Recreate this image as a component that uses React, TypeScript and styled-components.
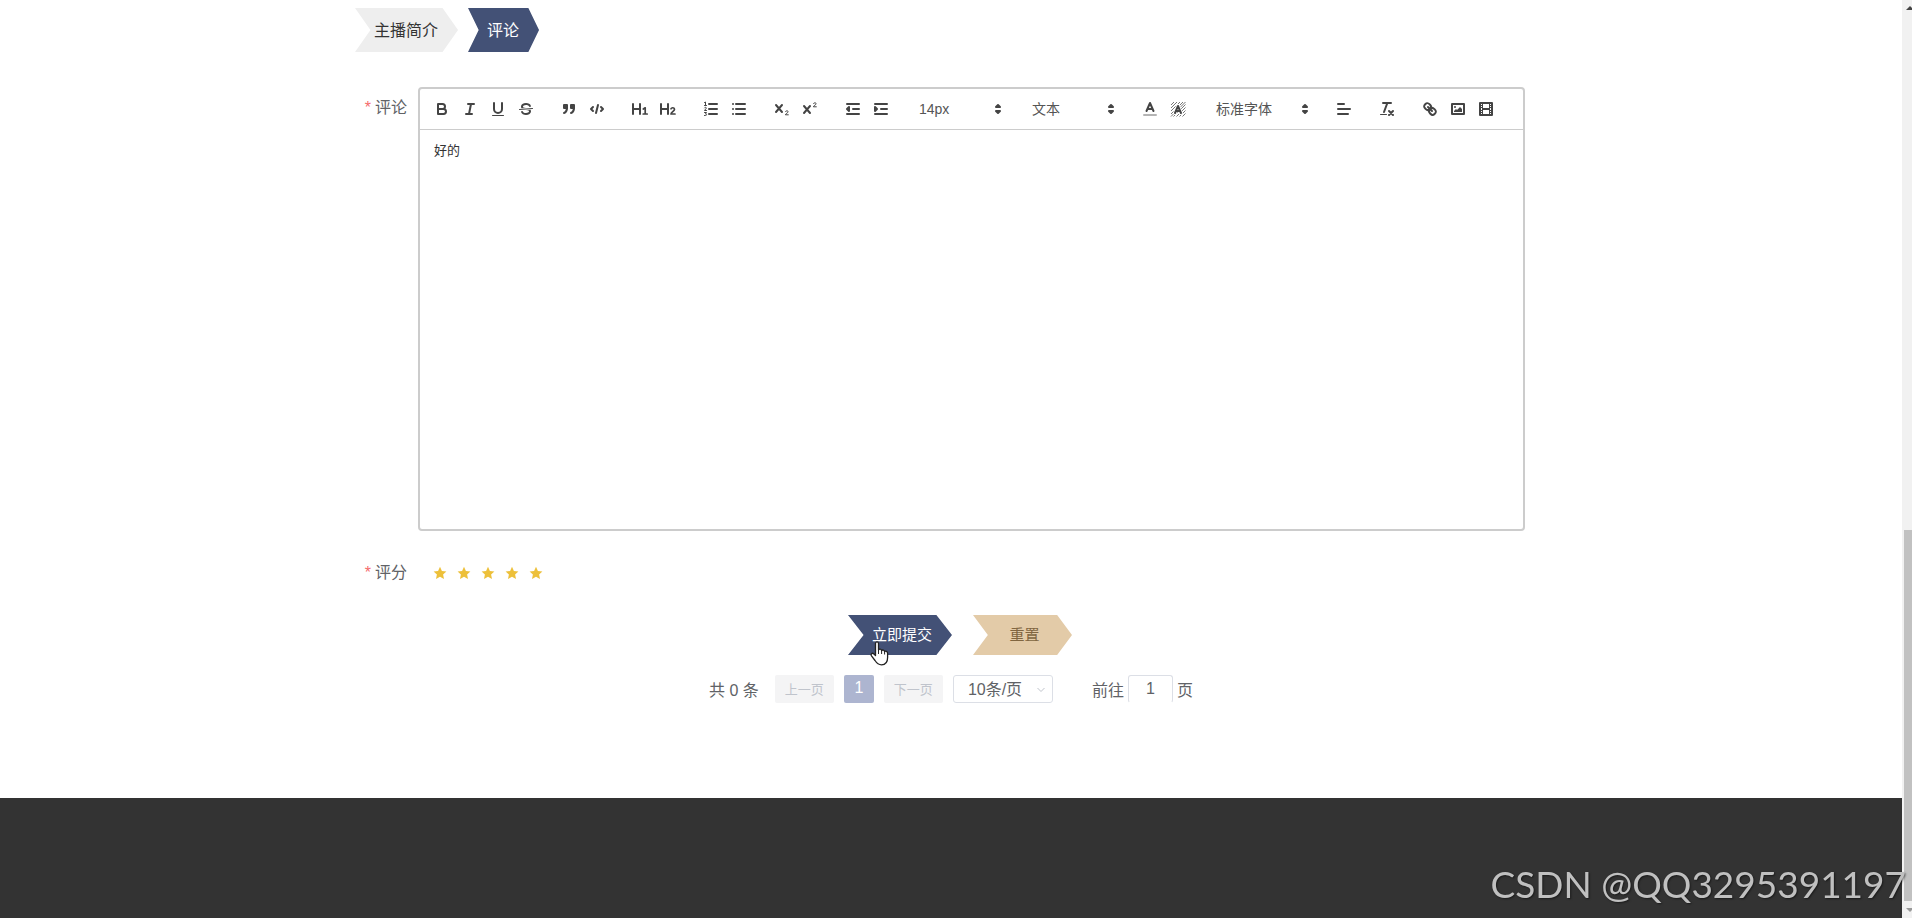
import React from 'react';
import styled, { createGlobalStyle, css } from 'styled-components';

const GlobalStyle = createGlobalStyle`
  * { box-sizing: border-box; }
  body {
    margin: 0;
    background: #fff;
    color: #606266;
    font-family: "Liberation Sans", "Noto Sans CJK SC", sans-serif;
    font-size: 16px;
  }
  button, input, select, textarea { font-family: inherit; }
`;

const Page = styled.div`
  display: flex;
  min-height: 100vh;
`;

const Main = styled.main`
  flex: 1;
  min-width: 0;
  display: flex;
  flex-direction: column;
`;

const Container = styled.div`
  width: 100%;
  max-width: 1192px;
  margin: 0 auto;
  padding: 8px 0 95px;
`;

const arrowShape = css`
  clip-path: polygon(0 0, 85% 0, 100% 50%, 85% 100%, 0 100%, 15% 50%);
  border: 0;
  cursor: pointer;
`;

const Tabs = styled.nav`
  display: flex;
  gap: 10px;
  margin-bottom: 35px;
`;

const Tab = styled.button<{ $active?: boolean }>`
  ${arrowShape}
  height: 44px;
  padding: 2px 20px 0 19px;
  font-size: 16px;
  line-height: 42px;
  background: ${(p) => (p.$active ? '#435176' : '#eee')};
  color: ${(p) => (p.$active ? '#fff' : '#333')};
`;

const FormRow = styled.div`
  display: flex;
  padding-right: 22px;
  margin-bottom: 21px;
`;

const Label = styled.label`
  flex: 0 0 63px;
  padding-right: 11px;
  text-align: right;
  line-height: 42px;
  &::before {
    content: "*";
    margin-right: 4px;
    color: #f56c6c;
  }
`;

const Editor = styled.div`
  flex: 1;
  min-width: 0;
  height: 444px;
  display: flex;
  flex-direction: column;
  border: 2px solid #ccc;
  border-radius: 4px;
`;

const Toolbar = styled.div`
  display: flex;
  flex-wrap: wrap;
  gap: 0 15px;
  padding: 8px;
  border-bottom: 1px solid #ccc;
`;

const ToolGroup = styled.div`
  display: flex;
`;

const ToolButton = styled.button`
  width: 28px;
  height: 24px;
  padding: 3px 5px;
  border: 0;
  background: none;
  cursor: pointer;
`;

const Icon = styled.svg`
  display: block;
  width: 18px;
  height: 18px;
  fill: none;
  stroke: #444;
  stroke-width: 2;
  stroke-linecap: round;
  stroke-linejoin: round;
  .fill { fill: #444; stroke: none; }
  .both { fill: #444; }
  .thin { stroke-width: 1; }
  .soft { opacity: 0.4; }
  .hatch { stroke-width: 1; stroke: #777; stroke-linecap: butt; }
  .halo { stroke: #fff; stroke-width: 4; }
`;

const Picker = styled.div<{ $width: number }>`
  position: relative;
  width: ${(p) => p.$width}px;
  height: 24px;
  svg {
    position: absolute;
    top: 3px;
    right: 1px;
    pointer-events: none;
  }
`;

const PickerSelect = styled.select`
  appearance: none;
  width: 100%;
  height: 24px;
  padding: 0 20px 0 9px;
  border: 0;
  background: none;
  color: #555;
  font-size: 14px;
  line-height: 24px;
`;

const EditorText = styled.textarea`
  flex: 1;
  padding: 12px 14px;
  border: 0;
  outline: 0;
  resize: none;
  background: none;
  color: #333;
  font-size: 13px;
  line-height: 18px;
`;

const Rating = styled.div`
  display: flex;
  align-items: center;
  gap: 10px;
  height: 42px;
  padding-left: 15px;
`;

const Star = styled.label`
  display: block;
  width: 14px;
  height: 14px;
  cursor: pointer;
  input {
    position: absolute;
    opacity: 0;
    margin: 0;
    width: 14px;
    height: 14px;
  }
  svg { display: block; fill: #edc03a; }
`;

const Actions = styled.div`
  display: flex;
  justify-content: center;
  gap: 21px;
  padding-left: 18px;
  margin-bottom: 20px;
`;

const ActionWrap = styled.div`
  position: relative;
`;

const ActionButton = styled.button<{ $primary?: boolean }>`
  ${arrowShape}
  display: block;
  min-width: 99px;
  height: 40px;
  padding: 0 20px 0 24px;
  font-size: 15px;
  line-height: 40px;
  background: ${(p) => (p.$primary ? '#435176' : '#e3cba8')};
  color: ${(p) => (p.$primary ? '#fff' : '#806540')};
`;

const HandCursor = styled.svg`
  position: absolute;
  left: 22px;
  top: 26px;
  pointer-events: none;
`;

const Pagination = styled.nav`
  display: flex;
  justify-content: center;
  align-items: center;
  height: 28px;
`;

const Total = styled.span`
  margin-right: 16px;
`;

const Pager = styled.div`
  display: flex;
  gap: 10px;
`;

const PageButton = styled.button<{ $current?: boolean }>`
  width: ${(p) => (p.$current ? 30 : 59)}px;
  height: 28px;
  padding: 0 0 2px;
  border: 0;
  border-radius: 2px;
  font-size: ${(p) => (p.$current ? 16 : 13)}px;
  background: ${(p) => (p.$current ? '#adb5d0' : '#f4f4f5')};
  color: ${(p) => (p.$current ? '#fff' : '#c0c4cc')};
`;

const SizeBox = styled.div`
  position: relative;
  width: 100px;
  svg {
    position: absolute;
    right: 7px;
    top: 10px;
    pointer-events: none;
  }
`;

const SizeSelect = styled.select`
  appearance: none;
  display: block;
  width: 100%;
  height: 28px;
  padding: 0 20px 0 14px;
  border: 1px solid #dcdfe6;
  border-radius: 3px;
  background: #fff;
  color: #606266;
  font-size: 16px;
`;

const Jump = styled.label`
  display: flex;
  align-items: center;
  gap: 4px;
  margin-left: 39px;
`;

const JumpInput = styled.input`
  width: 45px;
  height: 28px;
  padding: 0;
  border: 1px solid #dcdfe6;
  border-bottom-color: transparent;
  border-radius: 3px;
  color: #606266;
  font-size: 16px;
  text-align: center;
`;

const Footer = styled.footer`
  flex: 1;
  min-height: 120px;
  background: #333;
`;

const Scrollbar = styled.aside`
  position: sticky;
  top: 0;
  flex: 0 0 10px;
  height: 100vh;
  display: flex;
  flex-direction: column;
  align-items: flex-end;
  background: #f1f1f1;
`;

const ScrollArrow = styled.svg`
  display: block;
  flex: 0 0 17px;
  width: 8px;
`;

const ScrollSpace = styled.div`
  flex: 513;
`;

const ScrollThumb = styled.div`
  flex: 371;
  width: 8px;
  background: #c1c1c1;
`;

const Watermark = styled.div`
  position: fixed;
  right: 6px;
  bottom: 12px;
  color: #c0c0c0;
  font-family: Lato, "Liberation Sans", sans-serif;
  font-size: 37px;
  line-height: 44px;
  white-space: nowrap;
  text-shadow: 1px 1px 2px rgba(0, 0, 0, 0.5);
`;

type Tool = { name: string; art: React.ReactNode };

const bars = <path d="M3 14H15M3 4H15M9 9H15" />;

const textTools: Tool[] = [
  { name: '加粗', art: <><path d="M5 4H9.500a2.500 2.500 0 0 1 0 5H5Z" /><path d="M5 9h5.500a2.500 2.500 0 0 1 0 5H5Z" /></> },
  { name: '斜体', art: <path d="M7 4H13M5 14H11M8 14L10 4" /> },
  { name: '下划线', art: <><path d="M5 3V9a4 4 0 0 0 8 0V3" /><rect className="fill" x="3" y="15" width="12" height="1" rx="0.5" /></> },
  {
    name: '删除线',
    art: (
      <>
        <path className="thin" d="M15.500 8.500L2.500 9.500" />
        <path className="fill" d="M9.007,8C6.542,7.791,6,7.519,6,6.5,6,5.792,7.283,5,9,5c1.571,0,2.765.679,2.969,1.309a1,1,0,0,0,1.9-.617C13.356,4.106,11.354,3,9,3,6.2,3,4,4.538,4,6.5a3.2,3.2,0,0,0,.5,1.843Z" />
        <path className="fill" d="M8.984,10C11.457,10.208,12,10.479,12,11.5c0,0.708-1.283,1.5-3,1.5-1.571,0-2.765-.679-2.969-1.309a1,1,0,1,0-1.9.617C4.644,13.894,6.646,15,9,15c2.8,0,5-1.538,5-3.5a3.2,3.2,0,0,0-.5-1.843Z" />
      </>
    ),
  },
];

const quoteTools: Tool[] = [
  {
    name: '引用',
    art: (
      <>
        <rect className="both" x="4" y="5" width="3" height="3" />
        <rect className="both" x="11" y="5" width="3" height="3" />
        <path className="both" d="M7,8c0,4.031-3,5-3,5M14,8c0,4.031-3,5-3,5" />
      </>
    ),
  },
  { name: '代码', art: <path d="M5 7L3 9L5 11M13 7L15 9L13 11M10 5L8 13" /> },
];

const headingTools: Tool[] = [
  { name: '标题1', art: <><path d="M2 4V14M9 4V14M2 9H9" /><path strokeWidth="1.7" d="M12.300 9L14.200 7.800V14M12.200 14H16.200" /></> },
  { name: '标题2', art: <><path d="M2 4V14M9 4V14M2 9H9" /><path strokeWidth="1.7" d="M12 8.800C12.600 7.300 15.500 7.400 15.500 9.300C15.500 11.300 12.100 12 12 14H16" /></> },
];

const listTools: Tool[] = [
  {
    name: '有序列表',
    art: (
      <>
        <path d="M7 4H15M7 9H15M7 14H15" />
        <path className="thin" d="M2.500 2.500L3.500 2V5.500M2.500 5.500H4.500M2.500 7.800C3 7 4.500 7.200 4.300 8.200L2.500 10.500H4.500M2.500 12.500H4.500L3.500 14C5 14 4.800 15.500 3.500 15.500H2.500" />
      </>
    ),
  },
  { name: '无序列表', art: <path d="M6 4H15M6 9H15M6 14H15M3 4H3.010M3 9H3.010M3 14H3.010" /> },
];

const smallTwo = 'c.3-1.200 2.700-1.100 2.600.2c-.1 1.200-2.600 1.700-2.700 3h2.900';

const scriptTools: Tool[] = [
  { name: '下标', art: <><path d="M3 5L9 12M9 5L3 12" /><path className="thin" d={`M12.500 11.600${smallTwo}`} /></> },
  { name: '上标', art: <><path d="M3 6L9 13M9 6L3 13" /><path className="thin" d={`M12.500 3.600${smallTwo}`} /></> },
];

const indentTools: Tool[] = [
  { name: '减少缩进', art: <>{bars}<path className="both" d="M5 7V11L3 9Z" /></> },
  { name: '增加缩进', art: <>{bars}<path className="both" d="M3 7V11L5 9Z" /></> },
];

const colorTools: Tool[] = [
  { name: '文字颜色', art: <><path className="soft" d="M3 15H15" /><path d="M5.500 11L9 3L12.500 11M6.400 9H11.600" /></> },
  {
    name: '背景颜色',
    art: (
      <>
        <path
          className="hatch"
          d="M2 5L5 2M2 8L8 2M2 11L11 2M2 14L14 2M2 16.500L16.500 2M4.500 16.500L16.500 4.500M7.500 16.500L16.500 7.500M10.500 16.500L16.500 10.500M13.500 16.500L16.500 13.500"
        />
        <path className="halo" d="M6 13L9 6L12 13" />
        <path d="M6 13L9 6L12 13M7 11H11" />
      </>
    ),
  },
];

const alignTools: Tool[] = [{ name: '对齐', art: <path d="M3 9H15M3 14H13M3 4H9" /> }];

const cleanTools: Tool[] = [
  {
    name: '清除格式',
    art: (
      <>
        <path d="M5 3H13M6 12L9.350 3M11 11L15 15M15 11L11 15" />
        <rect className="fill" x="2" y="14" width="7" height="1" rx="0.5" />
      </>
    ),
  },
];

const mediaTools: Tool[] = [
  {
    name: '链接',
    art: (
      <>
        <path d="M7 7L11 11" />
        <path d="M8.9,4.577a3.476,3.476,0,0,1,.36,4.679A3.476,3.476,0,0,1,4.577,8.9C3.185,7.5,2.035,6.4,4.217,4.217S7.5,3.185,8.9,4.577Z" />
        <path d="M13.423,9.1a3.476,3.476,0,0,0-4.679-.36,3.476,3.476,0,0,0,.36,4.679c1.392,1.392,2.5,2.542,4.679.36S14.815,10.5,13.423,9.1Z" />
      </>
    ),
  },
  {
    name: '图片',
    art: (
      <>
        <rect x="3" y="4" width="12" height="10" />
        <circle className="fill" cx="6" cy="7" r="1" />
        <path className="fill" d="M5 12V11L7 9L8 10L11 7L13 9V12Z" />
      </>
    ),
  },
  {
    name: '视频',
    art: (
      <>
        <rect x="3" y="3" width="12" height="12" />
        <path className="fill" d="M5 3h1v12H5ZM12 3h1v12h-1ZM5 8h8v2H5ZM3 5h3v1H3ZM3 7h3v1H3ZM3 10h3v1H3ZM3 12h3v1H3ZM12 5h3v1h-3ZM12 7h3v1h-3ZM12 10h3v1h-3ZM12 12h3v1h-3Z" />
      </>
    ),
  },
];

function Tools({ items }: { items: Tool[] }) {
  return (
    <ToolGroup>
      {items.map((tool) => (
        <ToolButton key={tool.name} type="button" aria-label={tool.name}>
          <Icon viewBox="0 0 18 18">{tool.art}</Icon>
        </ToolButton>
      ))}
    </ToolGroup>
  );
}

function ToolPicker({ label, value, width }: { label: string; value: string; width: number }) {
  return (
    <Picker $width={width}>
      <PickerSelect aria-label={label}>
        <option>{value}</option>
      </PickerSelect>
      <Icon viewBox="0 0 18 18">
        <path className="both" d="M7 11L9 13L11 11ZM7 7L9 5L11 7Z" />
      </Icon>
    </Picker>
  );
}

export default function App() {
  return (
    <>
      <GlobalStyle />
      <Page>
        <Main>
          <Container>
            <Tabs>
              <Tab type="button">主播简介</Tab>
              <Tab type="button" $active>评论</Tab>
            </Tabs>
            <form onSubmit={(e) => e.preventDefault()}>
              <FormRow>
                <Label htmlFor="comment">评论</Label>
                <Editor>
                  <Toolbar>
                    <Tools items={textTools} />
                    <Tools items={quoteTools} />
                    <Tools items={headingTools} />
                    <Tools items={listTools} />
                    <Tools items={scriptTools} />
                    <Tools items={indentTools} />
                    <ToolPicker label="字号" value="14px" width={98} />
                    <ToolPicker label="标题" value="文本" width={98} />
                    <Tools items={colorTools} />
                    <ToolPicker label="字体" value="标准字体" width={108} />
                    <Tools items={alignTools} />
                    <Tools items={cleanTools} />
                    <Tools items={mediaTools} />
                  </Toolbar>
                  <EditorText id="comment" defaultValue="好的" spellCheck={false} />
                </Editor>
              </FormRow>
              <FormRow>
                <Label htmlFor="star-5">评分</Label>
                <Rating>
                  {[1, 2, 3, 4, 5].map((n) => (
                    <Star key={n}>
                      <input id={`star-${n}`} type="radio" name="score" value={n} aria-label={`${n} 星`} defaultChecked={n === 5} />
                      <svg width="14" height="14" viewBox="0 0 14 14">
                        <path d="M7 .800L8.900 4.900L13.400 5.400L10.100 8.500L11 13L7 10.800L3 13L3.900 8.500L.600 5.400L5.100 4.900Z" />
                      </svg>
                    </Star>
                  ))}
                </Rating>
              </FormRow>
              <Actions>
                <ActionWrap>
                  <ActionButton type="submit" $primary>立即提交</ActionButton>
                  <HandCursor width="19" height="25" viewBox="0 0 19 25">
                    <path
                      fill="#fff"
                      stroke="#222"
                      strokeWidth="1.3"
                      strokeLinejoin="round"
                      d="M5.500 14.500V2.600C5.500.400 8.500.400 8.500 2.600V9C9 7.600 11.500 7.800 11.600 9.600C12.200 8.600 14.500 8.800 14.600 10.600C15.300 9.800 17.600 10.200 17.600 12.200V16.500C17.600 21.500 15 23.800 11.500 23.800C7.800 23.800 6.600 22 5 19.500L1.500 14.800C.300 13 2.300 11.600 3.600 12.800Z"
                    />
                    <path stroke="#222" strokeWidth="1" d="M8.500 9V13M11.600 9.600V13M14.600 10.600V13.500" />
                  </HandCursor>
                </ActionWrap>
                <ActionButton type="reset">重置</ActionButton>
              </Actions>
            </form>
            <Pagination aria-label="分页">
              <Total>共 0 条</Total>
              <Pager>
                <PageButton type="button" disabled>上一页</PageButton>
                <PageButton type="button" $current>1</PageButton>
                <PageButton type="button" disabled>下一页</PageButton>
                <SizeBox>
                  <SizeSelect aria-label="每页条数">
                    <option>10条/页</option>
                  </SizeSelect>
                  <svg width="10" height="10" viewBox="0 0 10 10" fill="none" stroke="#c0c4cc">
                    <path d="M1.500 3L5 6.500L8.500 3" />
                  </svg>
                </SizeBox>
              </Pager>
              <Jump>
                前往
                <JumpInput type="text" defaultValue="1" />
                页
              </Jump>
            </Pagination>
          </Container>
          <Footer />
        </Main>
        <Scrollbar aria-hidden="true">
          <ScrollArrow viewBox="0 0 8 17" height="17">
            <path fill="#444" d="M2 10L6 6L10 10Z" />
          </ScrollArrow>
          <ScrollSpace />
          <ScrollThumb />
          <ScrollArrow viewBox="0 0 8 17" height="17">
            <path fill="#999" d="M2 7L6 11L10 7Z" />
          </ScrollArrow>
        </Scrollbar>
      </Page>
      <Watermark>CSDN @QQ3295391197</Watermark>
    </>
  );
}
